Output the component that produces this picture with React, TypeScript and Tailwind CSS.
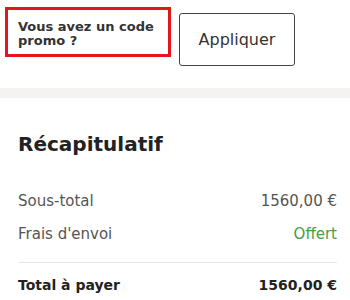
export default function App() {
  return (
    <div className="w-[350px] h-[300px] overflow-hidden bg-white font-['DejaVu_Sans',sans-serif]">
      {/* promo code */}
      <div className="flex items-start h-[88px]">
        <div className="ml-[5px] mt-[7px] w-[166px] h-[50px] border-[3px] border-[#e3161c] pl-[10px] pt-[10px]">
          <p className="text-[13px] leading-[14px] font-bold text-[#333]">
            Vous avez un code promo ?
          </p>
        </div>
        <button className="ml-[8px] mt-[13px] w-[116px] h-[53px] border border-[#444] rounded-[3px] text-[16px] text-[#333] bg-white">
          Appliquer
        </button>
      </div>

      <div className="h-[10px] bg-[#f4f3f1]" />

      {/* summary */}
      <div className="px-[18px] pr-[13px]">
        <h2 className="mt-[33px] text-[20px] leading-[26px] font-bold text-[#222]">Récapitulatif</h2>
        <div className="mt-[34px] flex justify-between h-[20px] text-[15px] leading-[20px] text-[#555]">
          <span>Sous-total</span>
          <span>1560,00 €</span>
        </div>
        <div className="mt-[13px] flex justify-between h-[20px] text-[15px] leading-[20px]">
          <span className="text-[#555]">Frais d'envoi</span>
          <span className="text-[#43a047]">Offert</span>
        </div>
        <div className="mt-[18px] border-t border-[#e6e6e6]" />
        <div className="mt-[12px] flex justify-between h-[20px] text-[14px] leading-[20px] font-bold text-[#222]">
          <span>Total à payer</span>
          <span>1560,00 €</span>
        </div>
      </div>
    </div>
  )
}
